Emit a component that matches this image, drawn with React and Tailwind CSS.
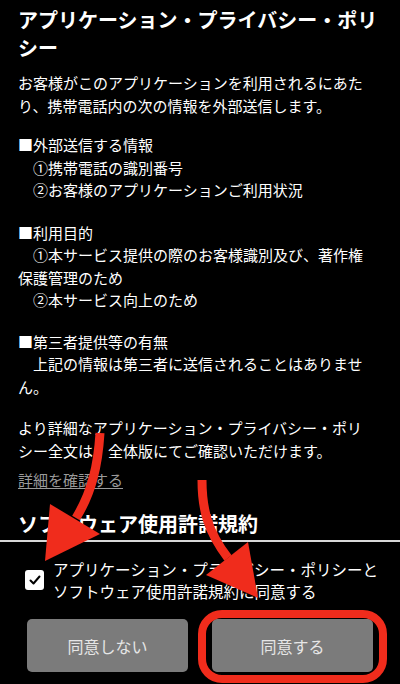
import React from 'react';

const jp = { fontFamily: '"Noto Sans CJK JP", "Noto Sans", sans-serif' };
const sp = '\u3000';

export default function App() {
  return (
    <div className="relative w-[400px] h-[684px] bg-black text-white flex flex-col overflow-hidden" style={jp}>
      <div className="h-[540px] overflow-hidden px-[18px] pt-[6px] whitespace-pre">
        <h1 className="text-[20px] leading-[28px] font-bold">
          アプリケーション・プライバシー・ポリ<br />シー
        </h1>
        <p className="mt-[10px] text-[15px] leading-[22.5px]">
          お客様がこのアプリケーションを利用されるにあた<br />り、携帯電話内の次の情報を外部送信します。
        </p>
        <p className="mt-[17px] text-[15px] leading-[22.5px]">
          ■外部送信する情報<br />
          {sp}①携帯電話の識別番号<br />
          {sp}②お客様のアプリケーションご利用状況
        </p>
        <p className="mt-[20px] text-[15px] leading-[22.5px]">
          ■利用目的<br />
          {sp}①本サービス提供の際のお客様識別及び、著作権<br />
          保護管理のため<br />
          {sp}②本サービス向上のため
        </p>
        <p className="mt-[19px] text-[15px] leading-[22.5px]">
          ■第三者提供等の有無<br />
          {sp}上記の情報は第三者に送信されることはありませ<br />
          ん。
        </p>
        <p className="mt-[19px] text-[15px] leading-[22.5px]">
          より詳細なアプリケーション・プライバシー・ポリ<br />
          シー全文は、全体版にてご確認いただけます。
        </p>
        <p className="mt-[7px] text-[15px] leading-[22.5px]">
          <a className="text-[#9a9a9a] underline underline-offset-2">詳細を確認する</a>
        </p>
        <h2 className="mt-[18px] text-[20px] leading-[28px] font-bold">ソフトウェア使用許諾規約</h2>
      </div>
      <div className="h-[2px] bg-[#d8d8d8]" />
      <div className="flex items-center gap-[9px] pl-[25px] pt-[16px]">
        <div className="w-[19px] h-[20px] rounded-[3px] bg-white flex items-center justify-center">
          <svg width="14" height="14" viewBox="0 0 14 14">
            <path d="M2.5 7.5 L5.5 10.5 L11.5 3.5" fill="none" stroke="#000" strokeWidth="2" strokeLinecap="round" strokeLinejoin="round" />
          </svg>
        </div>
        <p className="text-[15.5px] leading-[22px] whitespace-nowrap">
          アプリケーション・プライバシー・ポリシーと<br />ソフトウェア使用許諾規約に同意する
        </p>
      </div>
      <div className="flex gap-[24px] px-[27px] pt-[17px]">
        <button className="flex-1 h-[53px] rounded-[5px] bg-[#7b7b7b] text-[#e6e6e6] text-[16px]">同意しない</button>
        <button className="flex-1 h-[53px] rounded-[5px] bg-[#7b7b7b] text-[#e6e6e6] text-[16px]">同意する</button>
      </div>

      <svg className="absolute inset-0 pointer-events-none" width="400" height="684" viewBox="0 0 400 684">
        <path d="M100 433 C98 465 92 492 76 518" fill="none" stroke="#f02c1c" strokeWidth="9" />
        <polygon points="50,504 100,534 45,561" fill="#f02c1c" />
        <path d="M202 480 C202 510 208 532 228 558" fill="none" stroke="#f02c1c" strokeWidth="9" />
        <polygon points="206,575 248,542 258,598" fill="#f02c1c" />
        <rect x="202" y="614" width="181" height="65" rx="20" fill="none" stroke="#f02c1c" strokeWidth="8" />
      </svg>
    </div>
  );
}
